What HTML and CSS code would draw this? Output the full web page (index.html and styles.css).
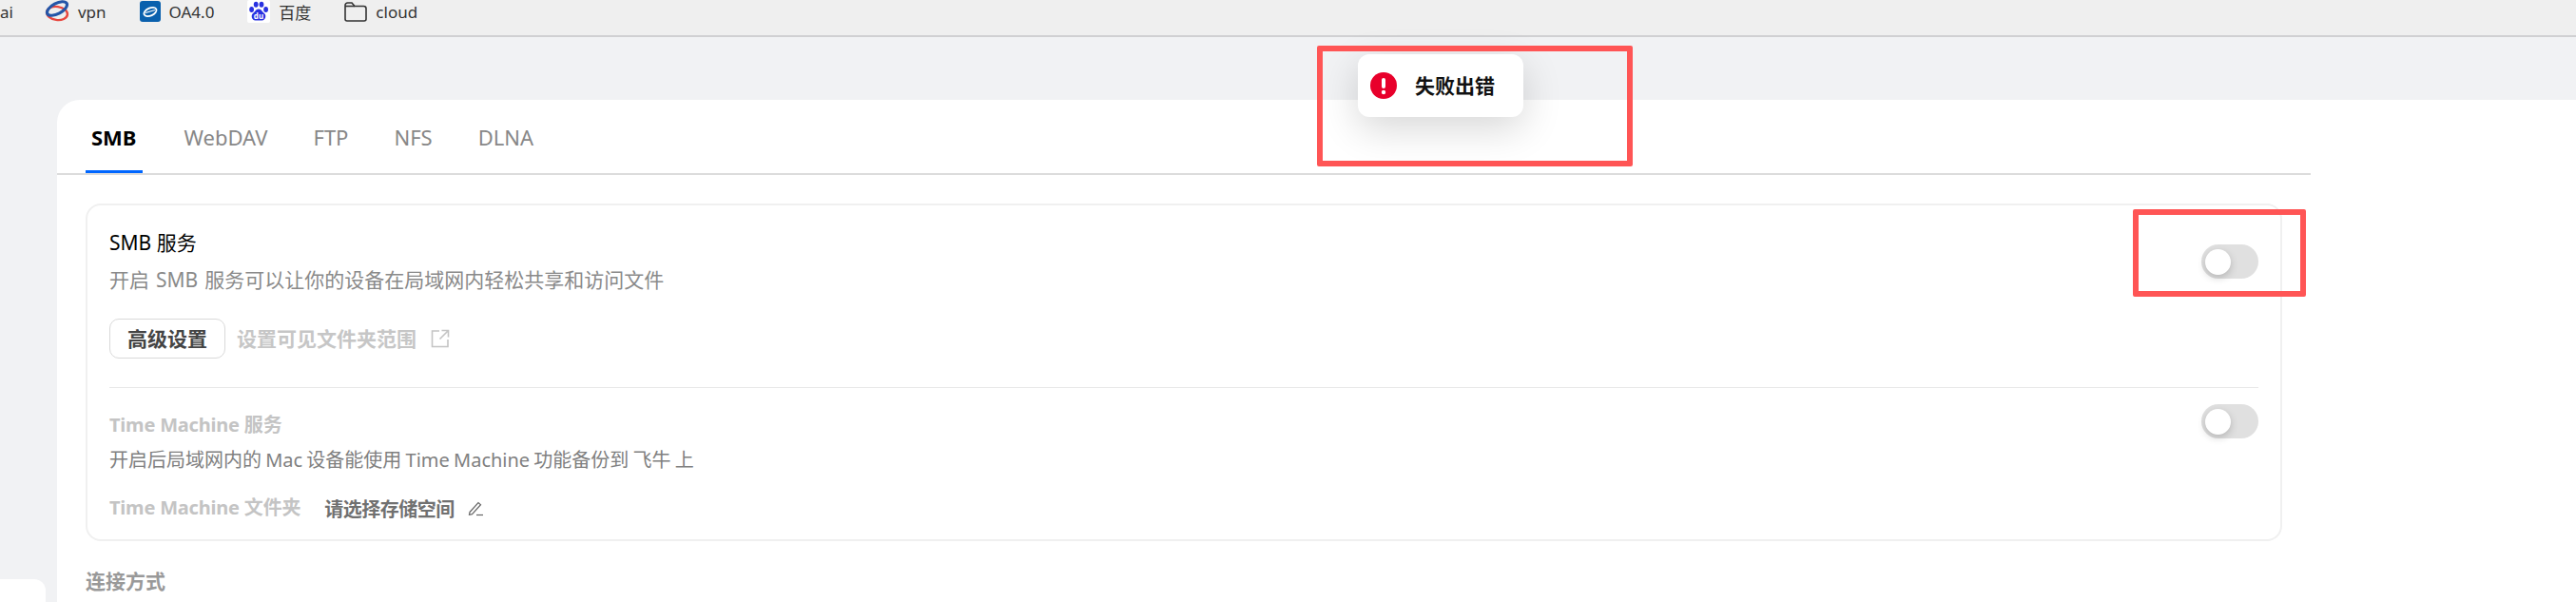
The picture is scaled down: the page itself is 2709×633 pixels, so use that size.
FILE: index.html
```html
<!DOCTYPE html>
<html lang="zh-CN">
<head>
  <meta charset="UTF-8" />
  <title>SMB</title>
  <link rel="stylesheet" href="styles.css">
</head>
<body>
  <div class="bookmarks">
    <span class="bm bm-first">ai</span>
    <span class="bm">
      <svg class="bm-icon" width="26" height="26" viewBox="0 0 26 26">
        <ellipse cx="13" cy="15" rx="11" ry="7" fill="none" stroke="#e8473f" stroke-width="2.4" transform="rotate(8 13 15)"/>
        <ellipse cx="13" cy="10" rx="11.5" ry="5.5" fill="none" stroke="#2456a8" stroke-width="3.2" transform="rotate(-28 13 10)"/>
      </svg>
      vpn
    </span>
    <span class="bm">
      <svg class="bm-icon" width="22" height="22" viewBox="0 0 22 22">
        <rect width="22" height="22" rx="3" fill="#0a60ad"/>
        <ellipse cx="11" cy="11.5" rx="7" ry="4" fill="none" stroke="#fff" stroke-width="1.8" transform="rotate(-25 11 11.5)"/>
        <path d="M6 12.5 L16 9.5" stroke="#fff" stroke-width="1.3"/>
      </svg>
      OA4.0
    </span>
    <span class="bm">
      <svg class="bm-icon" width="24" height="24" viewBox="0 0 24 24">
        <rect width="24" height="24" rx="2" fill="#fff"/>
        <g fill="#2932e1">
          <ellipse cx="4.6" cy="10" rx="2.4" ry="3"/>
          <ellipse cx="9.2" cy="4.8" rx="2.4" ry="3"/>
          <ellipse cx="15" cy="4.8" rx="2.4" ry="3"/>
          <ellipse cx="19.6" cy="10" rx="2.4" ry="3"/>
          <path d="M12 9.5c3 0 3.8 3 6 4.6 2.4 2 1.400 7.400-2.500 7.400H8.500c-3.900 0-4.900-5.400-2.500-7.400 2.200-1.600 3-4.600 6-4.600z"/>
        </g>
        <text x="12" y="20" class="du">du</text>
      </svg>
      百度
    </span>
    <span class="bm">
      <svg class="bm-icon" width="24" height="24" viewBox="0 0 24 24" fill="none" stroke="#333" stroke-width="1.600">
        <path d="M1 5.500a2.500 2.500 0 0 1 2.500-2.500h4.500l3 3.500h9.500a2.500 2.500 0 0 1 2.500 2.500v11a2 2 0 0 1-2 2h-18a2 2 0 0 1-2-2z"/>
        <path d="M1 6.500h10"/>
      </svg>
      cloud
    </span>
  </div>

  <div class="page">
    <div class="side">
      <div class="side-card"></div>
    </div>

    <div class="panel">
      <div class="tabs">
        <span class="tab active">SMB</span>
        <span class="tab">WebDAV</span>
        <span class="tab">FTP</span>
        <span class="tab">NFS</span>
        <span class="tab">DLNA</span>
      </div>

      <div class="card">
        <div class="svc">
          <div class="svc-text">
            <div class="title">SMB 服务</div>
            <div class="desc">开启 SMB 服务可以让你的设备在局域网内轻松共享和访问文件</div>
            <div class="actions">
              <button class="btn">高级设置</button>
              <span class="muted-link">设置可见文件夹范围</span>
              <svg class="link-icon" width="20" height="20" viewBox="0 0 20 20" fill="none" stroke="#c4c4c4" stroke-width="1.600">
                <path d="M9 2H1.500v16.500H18V11"/>
                <path d="M11.500 1.500h7v7M18.500 1.500l-9 9"/>
              </svg>
            </div>
          </div>
          <div class="toggle toggle-first"><span class="knob"></span></div>
        </div>

        <div class="svc svc-second">
          <div class="svc-text">
            <div class="title-off">Time Machine 服务</div>
            <div class="desc desc-tm">开启后局域网内的 Mac 设备能使用 Time Machine 功能备份到 飞牛 上</div>
            <div class="folder-row">
              <span class="title-off">Time Machine 文件夹</span>
              <span class="choose">请选择存储空间</span>
              <svg width="17" height="17" viewBox="0 0 17 17" fill="none" stroke="#666" stroke-width="1.200">
                <path d="M2 12.500 11 2.500l2.500 2.200-9 10-3 .6z"/>
                <path d="M9 15.500h7"/>
              </svg>
            </div>
          </div>
          <div class="toggle toggle-second"><span class="knob"></span></div>
        </div>
      </div>

      <div class="section-title">连接方式</div>
    </div>
  </div>

  <!-- toast and the two red marks sit over the page -->
  <div class="toast">
    <svg width="28" height="28" viewBox="0 0 28 28">
      <circle cx="14" cy="14" r="14" fill="#e8002b"/>
      <rect x="12" y="6" width="4" height="11" rx="2" fill="#fff"/>
      <circle cx="14" cy="21" r="2.200" fill="#fff"/>
    </svg>
    <span class="toast-text">失败出错</span>
  </div>
  <div class="mark mark-toast"></div>
  <div class="mark mark-toggle"></div>
</body>
</html>
```

FILE: styles.css
```css
html, body {
  margin: 0;
  height: 633px;
  overflow: hidden;
}

body {
  background: #f1f2f4;
  font-family: "Noto Sans", "Noto Sans CJK SC", sans-serif;
  font-size: 21px;
  position: relative;
}

/* bookmarks bar */
.bookmarks {
  display: flex;
  align-items: center;
  height: 39px;
  padding-bottom: 13px;
  box-sizing: border-box;
  background: #efefef;
  border-bottom: 2px solid #d0d0d2;
  font-size: 17px;
  color: #333;
  overflow: hidden;
}

.bm {
  display: flex;
  align-items: center;
  gap: 9px;
  margin-right: 35px;
  white-space: nowrap;
}

.bm-first {
  margin-right: 33px;
}

.bm-icon {
  flex: none;
}

.du {
  font-size: 8px;
  font-weight: 700;
  fill: #fff;
  text-anchor: middle;
}

/* page */
.page {
  display: flex;
}

.side {
  width: 48px;
  margin-right: 12px;
  flex: none;
}

.side-card {
  margin-top: 570px;
  height: 24px;
  background: #fff;
  border-radius: 0 12px 0 0;
}

.panel {
  flex: 1;
  margin-top: 66px;
  height: 528px;
  background: #fff;
  border-top-left-radius: 24px;
}

.tabs {
  display: flex;
  gap: 36px;
  width: 2370px;
  height: 79px;
  padding-left: 30px;
  box-sizing: border-box;
  border-bottom: 2px solid #dcdcdc;
  font-size: 22px;
}

.tab {
  padding: 0 6px;
  height: 77px;
  line-height: 78px;
  box-sizing: border-box;
  color: #878787;
}

.tab.active {
  margin-right: 2px;
  color: #000;
  font-weight: 700;
  border-bottom: 3px solid #0066ff;
}

.card {
  width: 2310px;
  height: 355px;
  margin: 30px 0 0 30px;
  padding: 25px 23px 0;
  box-sizing: border-box;
  border: 2px solid #f0f0f0;
  border-radius: 16px;
}

.svc {
  display: flex;
  justify-content: space-between;
  align-items: flex-start;
}

.svc-second {
  margin-top: 30px;
  padding-top: 25px;
  border-top: 1px solid #e8e8e8;
}

.title {
  line-height: 28px;
  color: #000;
}

.desc {
  margin-top: 11px;
  line-height: 28px;
  word-spacing: 1.5px;
  color: #8a8a8a;
}

.desc-tm {
  margin-top: 9px;
  font-size: 20px;
  word-spacing: -1px;
  color: #808080;
}

.actions {
  display: flex;
  align-items: center;
  margin-top: 27px;
}

.btn {
  width: 122px;
  height: 42px;
  padding: 0 0 2px;
  background: #fff;
  border: 1px solid #d9d9d9;
  border-radius: 10px;
  font: 700 21px "Noto Sans", "Noto Sans CJK SC", sans-serif;
  color: #444;
}

.muted-link {
  margin-left: 12px;
  margin-bottom: 2px;
  font-weight: 700;
  color: #c6c6c6;
}

.link-icon {
  margin-left: 15px;
}

.title-off {
  line-height: 28px;
  font-size: 20px;
  font-weight: 700;
  letter-spacing: -0.2px;
  color: #c4c4c4;
}

.folder-row {
  display: flex;
  align-items: center;
  height: 28px;
  margin-top: 22px;
}

.choose {
  margin-left: 25px;
  margin-right: 14px;
  font-size: 20px;
  letter-spacing: -0.5px;
  font-weight: 700;
  color: #707070;
}

.toggle {
  display: flex;
  align-items: center;
  width: 60px;
  height: 36px;
  padding-left: 4px;
  box-sizing: border-box;
  background: #e0e0e0;
  border-radius: 18px;
}

.toggle-first {
  margin-top: 16px;
}

.toggle-second {
  margin-top: -8px;
}

.knob {
  width: 27px;
  height: 27px;
  background: #fff;
  border-radius: 50%;
  box-shadow: 0 3px 8px rgba(0, 0, 0, 0.2);
}

.section-title {
  margin: 28px 0 0 30px;
  line-height: 28px;
  font-weight: 700;
  color: #999;
}

/* over the page */
.toast {
  position: absolute;
  left: 1428px;
  top: 57px;
  display: flex;
  align-items: center;
  gap: 19px;
  width: 174px;
  height: 66px;
  padding-left: 13px;
  box-sizing: border-box;
  background: #fff;
  border-radius: 12px;
  box-shadow: 0 12px 40px rgba(0, 0, 0, 0.16);
}

.toast-text {
  margin-bottom: 2px;
  font-size: 21px;
  font-weight: 700;
  color: #111;
}

.mark {
  position: absolute;
  box-sizing: border-box;
  border: 6px solid #ff5555;
  border-radius: 2px;
}

.mark-toast {
  left: 1385px;
  top: 48px;
  width: 332px;
  height: 127px;
}

.mark-toggle {
  left: 2243px;
  top: 220px;
  width: 182px;
  height: 92px;
}
```
